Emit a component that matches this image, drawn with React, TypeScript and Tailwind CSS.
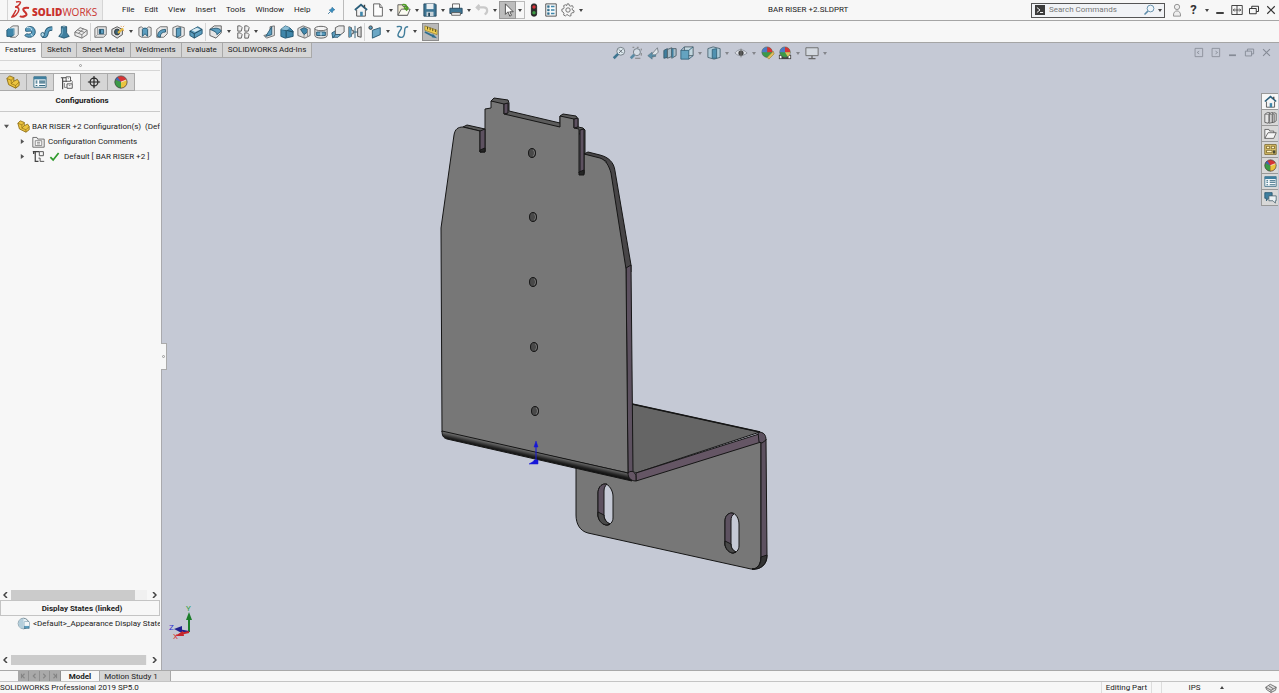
import type { ReactNode } from "react"
import clsx from "clsx"

const cube = "M2 5l4-3h8v8l-4 4H2z"

const icons: Record<string, ReactNode> = {
  extrude: (
    <>
      <path d="M5 3l3-2h6v10l-3 3H5z" fill="#e8e8e8" stroke="#666" />
      <path d="M1 6l2-2h6v7l-2 2H1z" fill="#3f86aa" stroke="#24556f" />
      <path d="M3 4h6v7" fill="none" stroke="#8cc0d8" />
    </>
  ),
  revolve: (
    <>
      <path d="M3 4c3-4 11-3 11 4 0 6-8 8-12 4l2-2c3 1 6 0 6-2S5 8 3 7z" fill="#5b9dbf" stroke="#24556f" />
      <path d="M4 3c3-1 6 0 6 3M11 13l-2-3" fill="none" stroke="#d7ebf5" />
    </>
  ),
  sweep: (
    <>
      <path d="M3 12c5 2 4-3 5-5s3-3 6-3" fill="none" stroke="#24556f" strokeWidth="5" />
      <path d="M3 12c5 2 4-3 5-5s3-3 6-3" fill="none" stroke="#5b9dbf" strokeWidth="3" />
      <ellipse cx="3" cy="11" rx="2" ry="2.5" fill="#b8dcea" stroke="#24556f" />
    </>
  ),
  loft: (
    <>
      <path d="M5 2h6v7l3 4-6 2-6-2 3-4z" fill="#3f7f9f" stroke="#24556f" />
      <path d="M5 2l3-1 3 1-3 1z" fill="#a5cfe1" stroke="#24556f" strokeWidth=".6" />
      <path d="M6 4v6l-2 3" stroke="#83b9d2" fill="none" />
    </>
  ),
  boundary: (
    <>
      <path d="M1 8l6-5 8 3v5l-6 4-8-3z" fill="#ececec" stroke="#666" />
      <path d="M1 8l8 3 6-5M9 11v4M4 5.500l8 3M5 9.500l6-5" fill="none" stroke="#777" />
    </>
  ),
  cut: (
    <>
      <path d="M1 4l3-2h10v9l-3 3H1z" fill="#e7e7e7" stroke="#666" />
      <path d="M4 2v9h10M4 11l-3 3" fill="none" stroke="#999" />
      <path d="M6 5h5v5H6z" fill="#5b9dbf" stroke="#24556f" />
      <path d="M6 5h2v5H6z" fill="#24556f" />
    </>
  ),
  hole: (
    <>
      <path d="M1 5l6-3 6 3v6l-6 4-6-4z" fill="#e2e2e2" stroke="#444" />
      <ellipse cx="7" cy="8" rx="3" ry="3.4" fill="#3b6175" stroke="#333" />
      <path d="M8 9l6-5" stroke="#e4b83e" strokeWidth="2.4" />
      <path d="M11 1l1 1M14 6l1 1M14 2l1-1" stroke="#d9862c" />
    </>
  ),
  cutRevolve: (
    <>
      <path d="M1 3l3-1 2 2h4l2-2 3 1v9l-3 2H4l-3-2z" fill="#e4e4e4" stroke="#666" />
      <path d="M5 5c0-2 6-2 6 0v8l-3-3-3 3z" fill="#5b9dbf" stroke="#24556f" />
    </>
  ),
  cutSweep: (
    <>
      <path d={cube} fill="#e8e8e8" stroke="#666" />
      <path d="M3 13c0-5 3-8 9-8v3c-4 0-6 2-6 6z" fill="#5b9dbf" stroke="#24556f" />
    </>
  ),
  cutLoft: (
    <>
      <path d="M1 3l5-2 8 2v9l-6 3-7-3z" fill="#e8e8e8" stroke="#666" />
      <path d="M5 4l5-1v9l-5 2z" fill="#5b9dbf" stroke="#24556f" />
    </>
  ),
  cutBoundary: (
    <>
      <path d="M1 7l9-5 5 3v5l-9 5-5-3z" fill="#5b9dbf" stroke="#24556f" />
      <path d="M1 7l5 3 9-5M6 10v5" fill="none" stroke="#1e4357" />
      <path d="M3 6l6-3 4 2-6 3z" fill="#d7e9f1" />
    </>
  ),
  fillet: (
    <>
      <path d="M1 5l5-4h8v8l-6 6-7-3z" fill="#e6e6e6" stroke="#555" />
      <path d="M5 4c4-1 8 0 9 3l-5 4c0-3-3-4-8-6z" fill="#5b9dbf" stroke="#24556f" />
    </>
  ),
  pattern: (
    <>
      {[1, 9].map((y) => (
        <g key={y} fill="#eee" stroke="#555">
          <path d={`M2 ${y}h3l2 2-1 4H2z`} />
          <path d={`M10 ${y}h3l2 2-1 4h-4z`} />
        </g>
      ))}
    </>
  ),
  rib: (
    <>
      <path d="M8 2l5-1v11l-9 3-3-3 7-2z" fill="#e3e3e3" stroke="#666" />
      <path d="M10 2v9l-7 2z" fill="#5b9dbf" stroke="#24556f" />
    </>
  ),
  draft: (
    <>
      <path d="M1 5l5-4 5 2 4 4v6l-9 2-5-2z" fill="#3f86aa" stroke="#24556f" />
      <path d="M1 5l6 1 8 2M7 6v8" fill="none" stroke="#194356" />
      <path d="M1 5l5-4 5 2-3 3z" fill="#8bbdd4" />
    </>
  ),
  shell: (
    <>
      <path d="M1 4l6-3 8 3v8l-6 3-8-3z" fill="#ddd" stroke="#666" />
      <path d="M4 5l4-2 4 2v3l-4 3z" fill="#3f86aa" stroke="#24556f" />
      <path d="M8 11v4M12 5v8" stroke="#888" />
    </>
  ),
  wrap: (
    <>
      <path d="M1 4v8c0 4 14 4 14 0V4" fill="#e3e3e3" stroke="#555" />
      <ellipse cx="8" cy="4" rx="7" ry="2.5" fill="#f4f4f4" stroke="#555" />
      <path d="M3 8h10v4H3z" fill="#5b9dbf" stroke="#24556f" />
      <path d="M8 8v4" stroke="#fff" />
    </>
  ),
  intersect: (
    <>
      <path d="M1 9l5-3v5l-4 4z" fill="#5b9dbf" stroke="#24556f" />
      <path d="M5 3l4-2h6v7l-4 3H5z" fill="#e8e8e8" stroke="#555" />
      <path d="M5 11h6l-3 3H3z" fill="#7db6d3" stroke="#24556f" />
    </>
  ),
  mirror: (
    <>
      <path d="M1 2l3 1v3h2v4H4v3l-3 1zM15 2l-4 2v9l4 1z" fill="#d9d9d9" stroke="#444" />
      <path d="M1 2l3 2v9l-3 1z" fill="#5b9dbf" />
      <path d="M8 1v14M6 8h5" stroke="#24556f" />
    </>
  ),
  refGeometry: (
    <>
      <path d="M5 6l9-3v8l-9 4z" fill="#6ba7c5" stroke="#24556f" />
      <circle cx="3" cy="3" r="2" fill="#5b9dbf" stroke="#333" />
    </>
  ),
  curves: (
    <path d="M2 2c5-1 7 0 4 4s-4 7 0 8 5-3 5-7 1-5 4-5" fill="none" stroke="#427e9b" strokeWidth="1.6" />
  ),
  instant3d: (
    <>
      <path d="M1 1l14 5v5L1 6z" fill="#f0cf55" stroke="#8a7620" strokeWidth=".7" />
      <path d="M4 2v3M7 3v3M10 4v3M13 5v3" stroke="#4a4215" />
      <path d="M1 8l10 5" stroke="#2f6d8d" strokeWidth="2" />
      <path d="M10 10l5 5-6-1z" fill="#2f6d8d" />
    </>
  ),
  home: (
    <>
      <path d="M3 8v7h10V8" fill="#f2f2f2" stroke="#444" />
      <path d="M1 8l7-6 7 6" fill="none" stroke="#2b5f7b" strokeWidth="2" />
      <path d="M7 10h3v5H7z" fill="#3f86aa" />
      <path d="M12 2v3" stroke="#444" strokeWidth="1.6" />
    </>
  ),
  newDoc: (
    <>
      <path d="M3 1h7l3 4v10H3z" fill="#fdfdfd" stroke="#555" />
      <path d="M10 1v4h3" fill="#ddd" stroke="#555" />
    </>
  ),
  open: (
    <>
      <path d="M1 2h5l1 2h5v10H1z" fill="#f0ead2" stroke="#555" />
      <path d="M1 14l4-7h10l-3 7z" fill="#fbfbf2" stroke="#555" />
      <path d="M6 2c4-1 5 1 5 4M8 5l3 3 2-3" fill="none" stroke="#4e9b24" strokeWidth="2" />
    </>
  ),
  save: (
    <>
      <path d="M1 1h13l1 1v13H1z" fill="#3d7594" stroke="#23475b" />
      <path d="M4 1h8v6H4z" fill="#e8eef1" />
      <path d="M4 10h8v5H4z" fill="#c7d2d8" />
      <path d="M6 11h2v4H6z" fill="#23475b" />
    </>
  ),
  print: (
    <>
      <path d="M4 1h8v6H4z" fill="#fafafa" stroke="#555" />
      <path d="M1 6h14v6H1z" fill="#3d7594" stroke="#23475b" />
      <path d="M3 11h10v3H3z" fill="#f4f4f4" stroke="#555" />
    </>
  ),
  undo: <path d="M5 2L2 5l3 3M2 5h8c5 0 5 6 1 8" fill="none" stroke="#c9c9c9" strokeWidth="2.5" />,
  cursor: <path d="M5 1v12l3-3 2 5 2-1-2-4h4z" fill="#fff" stroke="#444" />,
  light: (
    <>
      <rect x="5" y="1" width="6" height="14" rx="2.5" fill="#2c2c2c" stroke="#222" />
      <circle cx="8" cy="4.5" r="2" fill="#d8323a" />
      <circle cx="8" cy="11" r="2" fill="#3c9b43" />
    </>
  ),
  options: (
    <>
      <path d="M2 1h12v14H2z" fill="#f7fafb" stroke="#444" />
      <path d="M4 3h2v2H4zM4 7h2v2H4zM4 11h2v2H4z" fill="#2f6d8d" stroke="#2f6d8d" strokeWidth=".6" />
      <path d="M8 4h4M8 8h4M8 12h4" stroke="#3f86aa" strokeWidth="1.500" />
    </>
  ),
  table: (
    <>
      <path d="M1 2h14v12H1z" fill="#f7fafb" stroke="#356a83" />
      <path d="M1 2h14v3H1z" fill="#3f7f9f" />
      <path d="M3 7h2M3 9h2M3 12h2M7 7h7M7 9h7M7 12h7" stroke="#356a83" strokeWidth="1.2" />
    </>
  ),
  gear: (
    <>
      <path
        d="M7 1h2l.5 2 1.500.6L13 3l1 2-1.300 1.500.3 1.500 2 1-.5 2-2.200.2-1 1.300.2 2-2 .5-1.500-1.500-1.500 0-1.500 1.300-2-1 .4-2-1-1.500L1 9.500V7l2-.5.5-1.500L3 3l2-1 1.500 1z"
        fill="#f7f7f7"
        stroke="#666"
      />
      <circle cx="8" cy="8" r="2.500" fill="none" stroke="#666" />
    </>
  ),
  pin: (
    <>
      <path d="M9 2l5 5-2 0-2 3-1 2-5-5 2-1 3-2z" fill="#3a8fc0" stroke="#286a92" />
      <path d="M6 10l-4 4" stroke="#286a92" strokeWidth="1.500" />
    </>
  ),
  zoomFit: (
    <>
      <circle cx="10" cy="6" r="4.500" fill="#dde8ee" stroke="#6a747c" />
      <path d="M8 4l4 4M12 4L8 8" stroke="#5a656d" />
      <path d="M7 9l-5 5" stroke="#3e7591" strokeWidth="3" />
    </>
  ),
  zoomArea: (
    <>
      <path d="M4 1.500h2M9 1.500h2M14 3v2M14 8v3M7 14h6" stroke="#777" />
      <circle cx="9" cy="7" r="4" fill="#d6dfe7" stroke="#6a747c" />
      <path d="M6 10l-4 4" stroke="#5a8ba4" strokeWidth="3" />
    </>
  ),
  prevView: (
    <>
      <path d="M6 10l7-8 1 5-6 6z" fill="#dfe5e9" stroke="#747c84" />
      <path d="M7 7l-5 4 5 4v-3h4v-2H7z" fill="#5b8fa9" stroke="#4d6977" strokeWidth=".6" />
    </>
  ),
  section: (
    <>
      <path d="M1 5l4-2v10l-4 1z" fill="#3f7f9f" stroke="#375869" />
      <path d="M5 4l5-2v10l-5 2zM10 3h5v8l-5 3z" fill="#a9bdc8" stroke="#4c5d66" />
      <path d="M10 3h2v10h-2z" fill="#3f7f9f" />
    </>
  ),
  orient: (
    <>
      <path d="M5 1h10v10H5z" fill="#c3d7e0" stroke="#4c5d66" />
      <path d="M1 5h9v10H1z" fill="#64a3c0" stroke="#34637a" />
      <path d="M1 5l4-4M10 5l5-4M10 15l5-4" stroke="#34637a" />
    </>
  ),
  display: (
    <>
      <path d="M1 3l6-2 8 2v10l-7 2-7-2z" fill="#aecbd9" stroke="#4c6470" />
      <path d="M6 4l5-1v11l-5 0z" fill="#4f91b0" stroke="#34637a" />
    </>
  ),
  eye: (
    <>
      <path d="M1 8c4-5 9-5 14 0-5 4-10 4-14 0z" fill="#dfe2e8" stroke="#8a8f99" />
      <circle cx="8" cy="8" r="3" fill="#444" />
      <path d="M8 3v10" stroke="#777" />
    </>
  ),
  ball: (
    <>
      <circle cx="8" cy="8" r="7" fill="#d73434" />
      <path d="M8 8L1.500 5A7 7 0 008 15z" fill="#3c9a47" />
      <path d="M8 8v7a7 7 0 006.500-9.500z" fill="#e9c43f" />
      <path d="M8 8L4 2.300A7 7 0 001.500 5z" fill="#3b6bb6" />
      <path d="M8 8l6.500-2.500" stroke="#fff" strokeWidth=".8" />
      <circle cx="8" cy="8" r="7" fill="none" stroke="#444" strokeWidth=".8" />
    </>
  ),
  appearance: (
    <>
      <circle cx="7" cy="7" r="6" fill="#3c9a47" stroke="#555" strokeWidth=".6" />
      <path d="M7 7V1a6 6 0 016 6z" fill="#d73434" />
      <path d="M7 7H1a6 6 0 016-6z" fill="#4d79c4" />
      <path d="M7 13l7-7 1 3-6 6z" fill="#e0bf5d" stroke="#8c752c" strokeWidth=".6" />
    </>
  ),
  scene: (
    <>
      <path d="M1 10h14v5H1z" fill="#444" />
      <path d="M2 11h2v3H2zM12 11h2v3h-2z" fill="#fff" />
      <circle cx="8" cy="7" r="6" fill="#3c9a47" stroke="#555" strokeWidth=".6" />
      <path d="M8 7V1a6 6 0 016 6z" fill="#d73434" />
      <path d="M8 7H2a6 6 0 016-6z" fill="#4d79c4" />
      <path d="M8 7h6a6 6 0 01-3 5z" fill="#e0bf5d" />
    </>
  ),
  monitor: (
    <>
      <path d="M1 2h14v9H1z" fill="#d3d8df" stroke="#666" />
      <path d="M8 11v3M4 14.500h8" stroke="#666" strokeWidth="1.500" />
    </>
  ),
  part: (
    <>
      <path d="M1 4l3-3 5 2v4l4-2 2 3v4l-4 3-8-4z" fill="#ecc440" stroke="#8a6a14" />
      <path d="M1 4l5 2v4l5 2 4-4M11 12v3M6 6l3-3M6 10l3-3" fill="none" stroke="#8a6a14" strokeWidth=".8" />
    </>
  ),
  config: (
    <>
      <path d="M3 15V2h4M3 2H1M3 6h5" fill="none" stroke="#444" strokeWidth="1.300" />
      <path d="M7 1h5v5H7zM8 9h6v5H8z" fill="#fff" stroke="#444" />
      <path d="M5 8v5h3M9 3h1M10 11h2M12 4l2 2v3" fill="none" stroke="#777" />
    </>
  ),
  crosshair: (
    <>
      <circle cx="8" cy="8" r="4.500" fill="none" stroke="#222" strokeWidth="1.300" />
      <path d="M8 1v14M1 8h14" stroke="#222" strokeWidth="1.300" />
    </>
  ),
  comments: (
    <>
      <path d="M1 3h5l1 2h8v10H1z" fill="#f4f4f4" stroke="#555" />
      <path d="M4 7h8v6H4z" fill="#fff" stroke="#777" />
      <path d="M6 9h4M6 11h4" stroke="#777" />
    </>
  ),
  configNode: (
    <>
      <path d="M1 2h8M4 2v12h4M2 2v3" fill="none" stroke="#444" strokeWidth="1.500" />
      <path d="M9 2h5v5H9zM8 10h2v4h5" fill="none" stroke="#555" strokeWidth="1.200" />
    </>
  ),
  check: <path d="M2 9l4 4 8-10" fill="none" stroke="#2f9a2c" strokeWidth="2.500" />,
  displayState: (
    <>
      <circle cx="8" cy="8" r="6.500" fill="#e5eef2" stroke="#5c7480" />
      <path d="M8 1.500a6.500 6.500 0 000 13z" fill="#b4cedb" />
      <path d="M9 6h6v8H9z" fill="#5b9dbf" stroke="#24556f" strokeWidth=".6" />
      <path d="M9 6h6v5H9z" fill="#f1f5f7" />
    </>
  ),
  library: (
    <>
      <path d="M1 4l3-2h3v11l-2 2-4-1zM6 4l3-2h2v12l-5 1zM10 4l2-2 3 1v9l-3 2h-2z" fill="#e6e6e6" stroke="#555" />
      <path d="M1 4h12v10" fill="none" stroke="#777" />
    </>
  ),
  folder: <path d="M1 14V3h5l1 2h5v2M1 14l4-7h10l-3 7z" fill="#f5f5f5" stroke="#555" />,
  palette: (
    <>
      <path d="M1 2h14v12H1z" fill="#e9cf74" stroke="#6f5b21" />
      <path d="M3 4h4v3H3zM9 4h4v3H9zM3 9h7v3H3z" fill="#fff4c5" stroke="#6f5b21" />
      <path d="M11 9h3v4h-3z" fill="#4a4a35" />
    </>
  ),
  forum: (
    <>
      <path d="M1 2h9v7H5l-2 3V9H1z" fill="#3f7f9f" stroke="#24556f" />
      <path d="M6 6h9v6h-1v3l-3-3H6z" fill="#e9f1f4" stroke="#4c6470" />
    </>
  ),
  search: (
    <>
      <circle cx="10" cy="6" r="4.500" fill="#eef5fa" stroke="#5d8ba8" strokeWidth="1.200" />
      <path d="M6.500 9.500L2 14" stroke="#5d8ba8" strokeWidth="2" />
    </>
  ),
  prompt: (
    <>
      <path d="M0 0h16v16H0z" fill="#3b3b3b" />
      <path d="M3 4l5 4-5 4M8 12h5" fill="none" stroke="#fff" strokeWidth="1.500" />
    </>
  ),
  user: (
    <>
      <circle cx="8" cy="4.500" r="3" fill="#eee" stroke="#888" />
      <path d="M4 15c-1-8 9-8 8 0z" fill="#eee" stroke="#888" />
    </>
  ),
  minimize: <path d="M3 12h10" stroke="currentColor" strokeWidth="2.500" />,
  span: (
    <>
      <path d="M1 2h14v12H1zM8 2v12" fill="none" stroke="currentColor" strokeWidth="1.200" />
      <path d="M3 8h10M5 6L3 8l2 2M11 6l2 2-2 2" fill="none" stroke="currentColor" />
    </>
  ),
  restore: <path d="M2 6h9v7H2zM5 6V3h9v7h-3" fill="none" stroke="currentColor" strokeWidth="1.300" />,
  close: <path d="M3 3l10 10M13 3L3 13" stroke="currentColor" strokeWidth="1.500" />,
  paneLeft: <path d="M3 2h11v12H3zM9 6L6 8l3 2" fill="none" stroke="currentColor" strokeWidth="1.200" />,
  paneRight: <path d="M3 2h11v12H3zM8 6l3 2-3 2" fill="none" stroke="currentColor" strokeWidth="1.200" />,
  tag: (
    <>
      <path d="M1 7l6-4 8 4-1 4-6 3-6-4z" fill="#ddd" stroke="#555" />
      <path d="M1 7l7 4 7-4M8 11v3M5 5l6 4" fill="none" stroke="#555" />
    </>
  ),
}

function Icon({ name, className = "size-[14px]" }: { name: string; className?: string }) {
  return (
    <svg viewBox="0 0 16 16" className={clsx("shrink-0", className)} aria-hidden="true">
      {icons[name]}
    </svg>
  )
}

function Tool({ name, className }: { name: string; className?: string }) {
  return (
    <button aria-label={name} className={clsx("flex h-[18px] w-[17px] shrink-0 items-center justify-center", className)}>
      <Icon name={name} />
    </button>
  )
}

function Drop({ className = "w-[9px]" }: { className?: string }) {
  return (
    <button aria-label="More" className={clsx("flex h-[18px] shrink-0 items-center justify-center", className)}>
      <svg viewBox="0 0 4 3" className="h-[3px] w-1">
        <path d="M0 0h4L2 3z" fill="#444" />
      </svg>
    </button>
  )
}

// "|" is a separator, "v" a drop-down arrow
const featureTools =
  "extrude revolve sweep loft boundary | cut hole v cutRevolve cutSweep cutLoft cutBoundary | fillet v pattern v rib draft shell wrap intersect mirror | refGeometry v curves v".split(" ")

const viewTools = "zoomFit zoomArea prevView section orient v display v eye v appearance scene v monitor v".split(" ")

const commandTabs = ["Features", "Sketch", "Sheet Metal", "Weldments", "Evaluate", "SOLIDWORKS Add-Ins"]

function MenuBar() {
  return (
    <header className="flex h-[21px] shrink-0 items-center border-b border-[#a5a5a5] bg-[#f7f7f7]">
      <div className="ml-[7px] flex h-full w-24 shrink-0 items-center border-x border-[#d5d5d5] bg-gradient-to-r from-[#f7f7f7] to-[#ececec] pl-[3px] text-[#c9322d]">
        <svg viewBox="0 0 20 20" className="size-5 shrink-0" fill="none" stroke="#c9322d" strokeWidth="1.500">
          <path d="M5 2c5-1 6 0 2 4-2 1-3 1-3 1 5 0 5 4 1 8-1 1-3 2-4 2 2-3 3-5 4-7" />
          <path d="M18 8c-5-1-7 1-5 3s4 4 1 5c-2 1-4 1-5 0" strokeWidth="2" />
        </svg>
        <span className="ml-px mt-1 font-['Open_Sans'] text-[10px] leading-3">
          <b className="font-extrabold">SOLID</b>WORKS
        </span>
      </div>
      <nav className="ml-[19px] flex shrink-0 gap-[10px] leading-4">
        {["File", "Edit", "View", "Insert", "Tools", "Window", "Help"].map((item) => (
          <button key={item}>{item}</button>
        ))}
      </nav>
      <div className="ml-[13px] flex shrink-0 items-center">
        <button aria-label="Pin menu" className="flex w-4 justify-center">
          <Icon name="pin" className="size-[9px]" />
        </button>
        <span className="mx-1 h-5 w-px bg-[#bbb]" />
        <span className="w-1" />
        <Tool name="home" />
        <Tool name="newDoc" />
        <Drop />
        <Tool name="open" />
        <Drop />
        <Tool name="save" />
        <Drop />
        <Tool name="print" />
        <Drop />
        <Tool name="undo" />
        <Drop />
        <Tool name="cursor" className="border border-[#999] bg-[#bdbdbd]" />
        <Drop className="w-[9px] border border-l-0 border-[#bbb]" />
        <Tool name="light" />
        <Tool name="options" />
        <Tool name="gear" />
        <Drop />
      </div>
      <h1 className="min-w-0 flex-1 truncate text-center leading-4">BAR RISER +2.SLDPRT</h1>
      <label className="flex h-[15px] w-[134px] shrink-0 items-center border border-[#555] bg-[#f1f3f6] pl-[3px]">
        <Icon name="prompt" className="size-[10px]" />
        <input
          aria-label="Search Commands"
          placeholder="Search Commands"
          className="ml-1 min-w-0 flex-1 bg-transparent outline-none placeholder:text-[#777]"
        />
        <Icon name="search" className="size-3" />
        <Drop />
      </label>
      <div className="ml-[3px] flex shrink-0 items-center text-[#333]">
        <Tool name="user" />
        <button className="w-[17px] text-[13px] font-bold">?</button>
        <Drop />
        {["minimize", "span", "restore", "close"].map((name) => (
          <button key={name} aria-label={name} className="flex w-[17px] justify-center">
            <Icon name={name} className="size-3" />
          </button>
        ))}
      </div>
    </header>
  )
}

function FeatureBar() {
  return (
    <div className="flex h-[22px] shrink-0 items-center border-b border-[#a5a5a5] bg-[#f7f7f7] pl-1">
      {featureTools.map((name, i) => {
        if (name === "|") return <span key={i} className="mx-px h-[18px] w-px bg-[#d5d5d5]" />
        if (name === "v") return <Drop key={i} className="w-[10px]" />
        return <Tool key={i} name={name} />
      })}
      <Tool name="instant3d" className="ml-[2px] border border-[#8c8c8c] bg-[#b9b9b9]" />
    </div>
  )
}

function CommandTabs() {
  return (
    <div role="tablist" className="flex h-[15px] shrink-0 bg-[#c5c9d5]">
      {commandTabs.map((tab, i) => (
        <button
          key={tab}
          role="tab"
          aria-selected={i === 0}
          className={clsx(
            "border-b border-r border-[#a9a9a9] px-[5px]",
            i === 0 ? "border-b-[#f7f7f7] bg-[#f7f7f7]" : "bg-[#d6d6d6]",
          )}
        >
          {tab}
        </button>
      ))}
    </div>
  )
}

function ScrollBar({ thumb }: { thumb: string }) {
  return (
    <div className="flex h-[11px] shrink-0 items-center">
      <button aria-label="Scroll left" className="w-[11px]">
        <svg viewBox="0 0 6 6" className="mx-auto size-[6px]">
          <path d="M4 0L1 3l3 3" fill="none" stroke="#444" strokeWidth="1.500" />
        </svg>
      </button>
      <div className="h-[10px] flex-1 bg-[#f0f0f0]">
        <div className={clsx("h-full bg-[#cbcbcb]", thumb)} />
      </div>
      <button aria-label="Scroll right" className="w-[13px]">
        <svg viewBox="0 0 6 6" className="mx-auto size-[6px]">
          <path d="M2 0l3 3-3 3" fill="none" stroke="#444" strokeWidth="1.500" />
        </svg>
      </button>
    </div>
  )
}

function Arrow({ open }: { open?: boolean }) {
  return (
    <svg viewBox="0 0 6 6" className="size-[5px] shrink-0">
      <path d={open ? "M0 1h6L3 5z" : "M1 0v6l4-3z"} fill="#555" />
    </svg>
  )
}

function SidePanel() {
  return (
    <aside className="relative flex w-[162px] shrink-0 flex-col border-r border-[#a9a9ad] bg-[#f7f7f7] pr-px">
      <div className="mt-[2px] flex h-[11px] items-center justify-center border-y border-[#d6d6d6]">
        <span className="size-[3px] rounded-full border border-[#999]" />
      </div>
      <div role="tablist" className="mt-[2px] flex h-[18px] border-b border-[#d0d0d0]">
        {["part", "table", "config", "crosshair", "ball"].map((name) => (
          <button
            key={name}
            role="tab"
            aria-label={name}
            aria-selected={name === "config"}
            className={clsx(
              "flex h-[18px] w-[27px] items-center justify-center border-r border-t border-[#aaa]",
              name === "config" ? "bg-[#f7f7f7]" : "border-b bg-[#d6d6d6]",
            )}
          >
            <Icon name={name} />
          </button>
        ))}
      </div>
      <h2 className="h-[21px] border-b border-[#c9c9c9] pl-1 text-center font-bold leading-5">Configurations</h2>
      <ul className="flex-1 overflow-hidden whitespace-nowrap pl-1 pt-[7px] leading-[15px]">
        <li>
          <div className="flex items-center">
            <Arrow open />
            <Icon name="part" className="ml-2 mr-[2px] size-[13px]" />
            BAR RISER +2 Configuration(s)&nbsp; (Def
          </div>
          <ul className="pl-4">
            <li className="flex items-center">
              <Arrow />
              <Icon name="comments" className="ml-[7px] mr-[3px] size-[13px]" />
              Configuration Comments
            </li>
            <li className="flex items-center">
              <Arrow />
              <Icon name="configNode" className="ml-[7px] mr-1 size-[13px]" />
              <Icon name="check" className="mr-1 size-[11px]" />
              Default [ BAR RISER +2 ]
            </li>
          </ul>
        </li>
      </ul>
      <ScrollBar thumb="w-[91%]" />
      <div className="flex h-[70px] shrink-0 flex-col pb-[5px]">
        <h2 className="h-4 border border-[#c4c4c4] pl-1 text-center font-bold leading-4">Display States (linked)</h2>
        <div className="flex h-[15px] items-center overflow-hidden whitespace-nowrap pl-[17px] leading-4">
          <Icon name="displayState" className="mr-[3px] size-[13px]" />
          &lt;Default&gt;_Appearance Display State
        </div>
        <div className="flex-1" />
        <ScrollBar thumb="w-[99%]" />
      </div>
      <button
        aria-label="Collapse panel"
        className="absolute -right-[6px] top-[285px] z-10 flex h-[27px] w-[6px] items-center justify-center border border-l-0 border-[#aaa] bg-[#f7f7f7]"
      >
        <span className="size-[3px] rounded-full border border-[#999]" />
      </button>
    </aside>
  )
}

const holes = [
  [532, 153],
  [533, 217],
  [533, 282],
  [534, 347],
  [535, 411],
]

function Bracket() {
  return (
    <svg viewBox="162 58 1117 612" className="absolute inset-0 size-full" role="img" aria-label="Bar riser bracket">
      <defs>
        <linearGradient id="bend" x1="530" y1="451" x2="528" y2="460" gradientUnits="userSpaceOnUse">
          <stop offset="0" stopColor="#707070" />
          <stop offset=".5" stopColor="#222" />
          <stop offset=".8" stopColor="#090909" />
          <stop offset="1" stopColor="#4a4a4a" />
        </linearGradient>
      </defs>
      <g stroke="#161616" strokeLinejoin="round">
        {/* rear mounting flange */}
        <path
          fillRule="evenodd"
          fill="#777"
          d="M576 460V515c0 9 4 16 12 18L751 569c6 1 9-3 10-11V440L635 478zM605 484c-4 0-7 4-7 9v22c0 5 5 10 9 10 3 0 6-3 6-7v-22c0-5-4-12-8-12zM732 513c-4 0-7 3-7 8v23c0 5 5 9 8 9s6-3 6-7v-22c0-5-3-11-7-11z"
        />
        <path d="M605 484c-4 0-7 4-7 9v22c0 5 5 10 9 10 1 0 2 0 3-1-4-2-6-5-6-9v-24c0-3 1-5 3-7z" fill="#5d5160" />
        <path d="M732 513c-4 0-7 3-7 8v23c0 5 5 9 8 9l3-1c-4-2-5-5-5-8v-23c0-4 1-6 3-7z" fill="#5d5160" />
        <path d="M598 512v4c1 6 5 9 9 9l3-1c-4-2-6-5-6-9zM725 541v4c1 5 5 8 8 8l3-1c-4-2-5-5-5-8z" fill="#494949" />
        <path d="M761 440l5-1 1 117c0 9-7 14-15 13 6 0 9-5 9-11z" fill="#5d5160" />
        <path d="M761 557l6-2c0 9-6 15-15 14 6 0 9-5 9-12z" fill="#333" />
        {/* shelf and its edge */}
        <path d="M632 404l128 28-124 41-4-2z" fill="#656565" />
        <path d="M636 473l123-39 2 8-125 39z" fill="#655665" />
        <path d="M758 432c6 0 8 3 8 8l-4 3-3-1z" fill="#5d5160" />
        <path d="M632 404l128 28" strokeWidth="1.500" />
        {/* upright: thickness faces behind the front */}
        <path d="M491 101l3-3 14 2 1 3v8l51 12v-7l3-2 13 2 2 3v8l5 1 2 2v43l-5 1V134L504 117z" fill="#5c5c5c" />
        <path d="M463 127l4-2 18 4v21l-5 3v-22z" fill="#5c5c5c" />
        <path d="M584 154l4-2 12 3c8 2 14 7 15 16l16 94v7l-5 1-20-112z" fill="#484648" />
        <path d="M626 268l5-3 2 206-5 5z" fill="#5d5160" />
        <path
          fill="#777"
          d="M442 432L441 228l13-93c1-6 4-8 9-8l17 4v21h5V109l6-1v-7l13 3v10l56 13v-11l14 3v9l5 1v44l5 1V154l16 4c6 2 9 8 11 15l15 96 2 204z"
        />
        <path d="M580 130l4-1v44l-4 1z" fill="#5d5160" />
        <path d="M579 172l5-2v5h-5z" fill="#252525" />
        <path d="M480 131l5-2v22l-5 1z" fill="#5d5160" />
        <path d="M480 150l5-2v4h-5z" fill="#252525" />
        <path d="M504 104l4-1v10l-4 1zM574 119l4-1v9l-4 1z" fill="#5d5160" />
        {/* lower bend */}
        <path d="M442 431l186 42 4 8L447 439c-4-1-5-4-5-8z" fill="url(#bend)" />
        <path d="M628 473c4-4 8 0 8 4v4c-6 0-8-4-8-8z" fill="#655665" />
      </g>
      {holes.map(([x, y]) => (
        <g key={y}>
          <ellipse cx={x} cy={y} rx="3.500" ry="4.500" fill="#494949" stroke="#161616" />
          <path d={`M${x + 1} ${y - 3}c2 2 2 4 0 6`} stroke="#777" fill="none" />
        </g>
      ))}
      <g stroke="#1717d8" fill="#1717d8">
        <path d="M536 446v16l-3 1" fill="none" />
        <path d="M536 441l2 6h-4zM529 464l5-3v3z" strokeWidth=".5" />
        <path d="M534 460h4v4h-4z" strokeWidth=".5" />
      </g>
      {/* view triad */}
      <g strokeWidth="2">
        <path d="M189 632v-15" stroke="#1b7d2a" />
        <path d="M189 612l3 8h-6z" fill="#1b7d2a" />
        <path d="M189 632l-11-2" stroke="#20208f" />
        <path d="M174 629l8-3v7z" fill="#20208f" />
        <path d="M189 632l-9 2" stroke="#c6262b" />
        <path d="M175 636l8-5 1 5z" fill="#c6262b" />
      </g>
      <g className="font-['Roboto'] text-[8px]">
        <text x="186" y="611" fill="#35a047">Y</text>
        <text x="169" y="630" fill="#2f2fd0">Z</text>
        <text x="173" y="639" fill="#d4383c">X</text>
      </g>
    </svg>
  )
}

function Viewport() {
  return (
    <main className="relative min-w-0 flex-1 bg-[#c5c9d5]">
      <Bracket />
      <div className="absolute -top-[14px] left-[448px] flex">
        {viewTools.map((name, i) =>
          name === "v" ? <Drop key={i} className="w-[10px] opacity-50" /> : <Tool key={i} name={name} />,
        )}
      </div>
      <div className="absolute -top-[11px] right-[7px] flex gap-[6px] text-[#858a95]">
        {["paneLeft", "paneRight", "minimize", "restore", "close"].map((name) => (
          <button key={name} aria-label={name}>
            <Icon name={name} className="size-[11px]" />
          </button>
        ))}
      </div>
      <div className="absolute right-px top-[35px] flex flex-col border-l border-t border-[#999]">
        {["home", "library", "folder", "palette", "ball", "table", "forum"].map((name, i) => (
          <button
            key={name}
            aria-label={name}
            className={clsx(
              "flex size-4 items-center justify-center border-b border-[#999]",
              i === 0 ? "bg-[#f7f7f7]" : "bg-[#d8d8d8]",
            )}
          >
            <Icon name={name} className="size-[13px]" />
          </button>
        ))}
      </div>
    </main>
  )
}

function BottomTabs() {
  return (
    <div className="flex h-[11px] shrink-0 border-t border-[#a9a9a9] bg-[#f7f7f7] leading-[9px]">
      <div className="ml-[18px] flex w-[43px] bg-[#a9a9a9]">
        {["M6 1L3 4l3 3M2 1v6", "M6 1L3 4l3 3", "M3 1l3 3-3 3", "M2 1l3 3-3 3M6 1v6"].map((d) => (
          <button key={d} aria-label="Scroll tabs" className="flex flex-1 items-center justify-center border-r border-[#8f8f8f]">
            <svg viewBox="0 0 8 8" className="size-[6px]">
              <path d={d} fill="none" stroke="#858585" strokeWidth="1.500" />
            </svg>
          </button>
        ))}
      </div>
      <button className="w-[39px] border-r border-[#a9a9a9] font-bold">Model</button>
      <button className="w-[71px] border-r border-[#a9a9a9] bg-[#d6d6d6] pr-2">Motion Study 1</button>
    </div>
  )
}

function StatusBar() {
  return (
    <footer className="flex h-3 shrink-0 items-center border-t border-[#c4c4c4] bg-[#f7f7f7] leading-[11px]">
      <span>SOLIDWORKS Professional 2019 SP5.0</span>
      <span className="ml-auto border-x border-[#ddd] px-1">Editing Part</span>
      <span className="ml-[9px] w-[66px] border-l border-[#ddd] text-center">IPS</span>
      <button aria-label="Units" className="-ml-[10px] mr-[38px] w-[10px]">
        <svg viewBox="0 0 4 3" className="mx-auto h-[3px] w-1">
          <path d="M0 3h4L2 0z" fill="#444" />
        </svg>
      </button>
      <Icon name="tag" className="mr-[2px] size-3" />
    </footer>
  )
}

export default function App() {
  return (
    <div className="flex h-screen flex-col overflow-hidden bg-[#f7f7f7] font-['Roboto',sans-serif] text-[8px] leading-[14px] text-[#222]">
      <MenuBar />
      <FeatureBar />
      <CommandTabs />
      <div className="flex min-h-0 flex-1">
        <SidePanel />
        <Viewport />
      </div>
      <BottomTabs />
      <StatusBar />
    </div>
  )
}
